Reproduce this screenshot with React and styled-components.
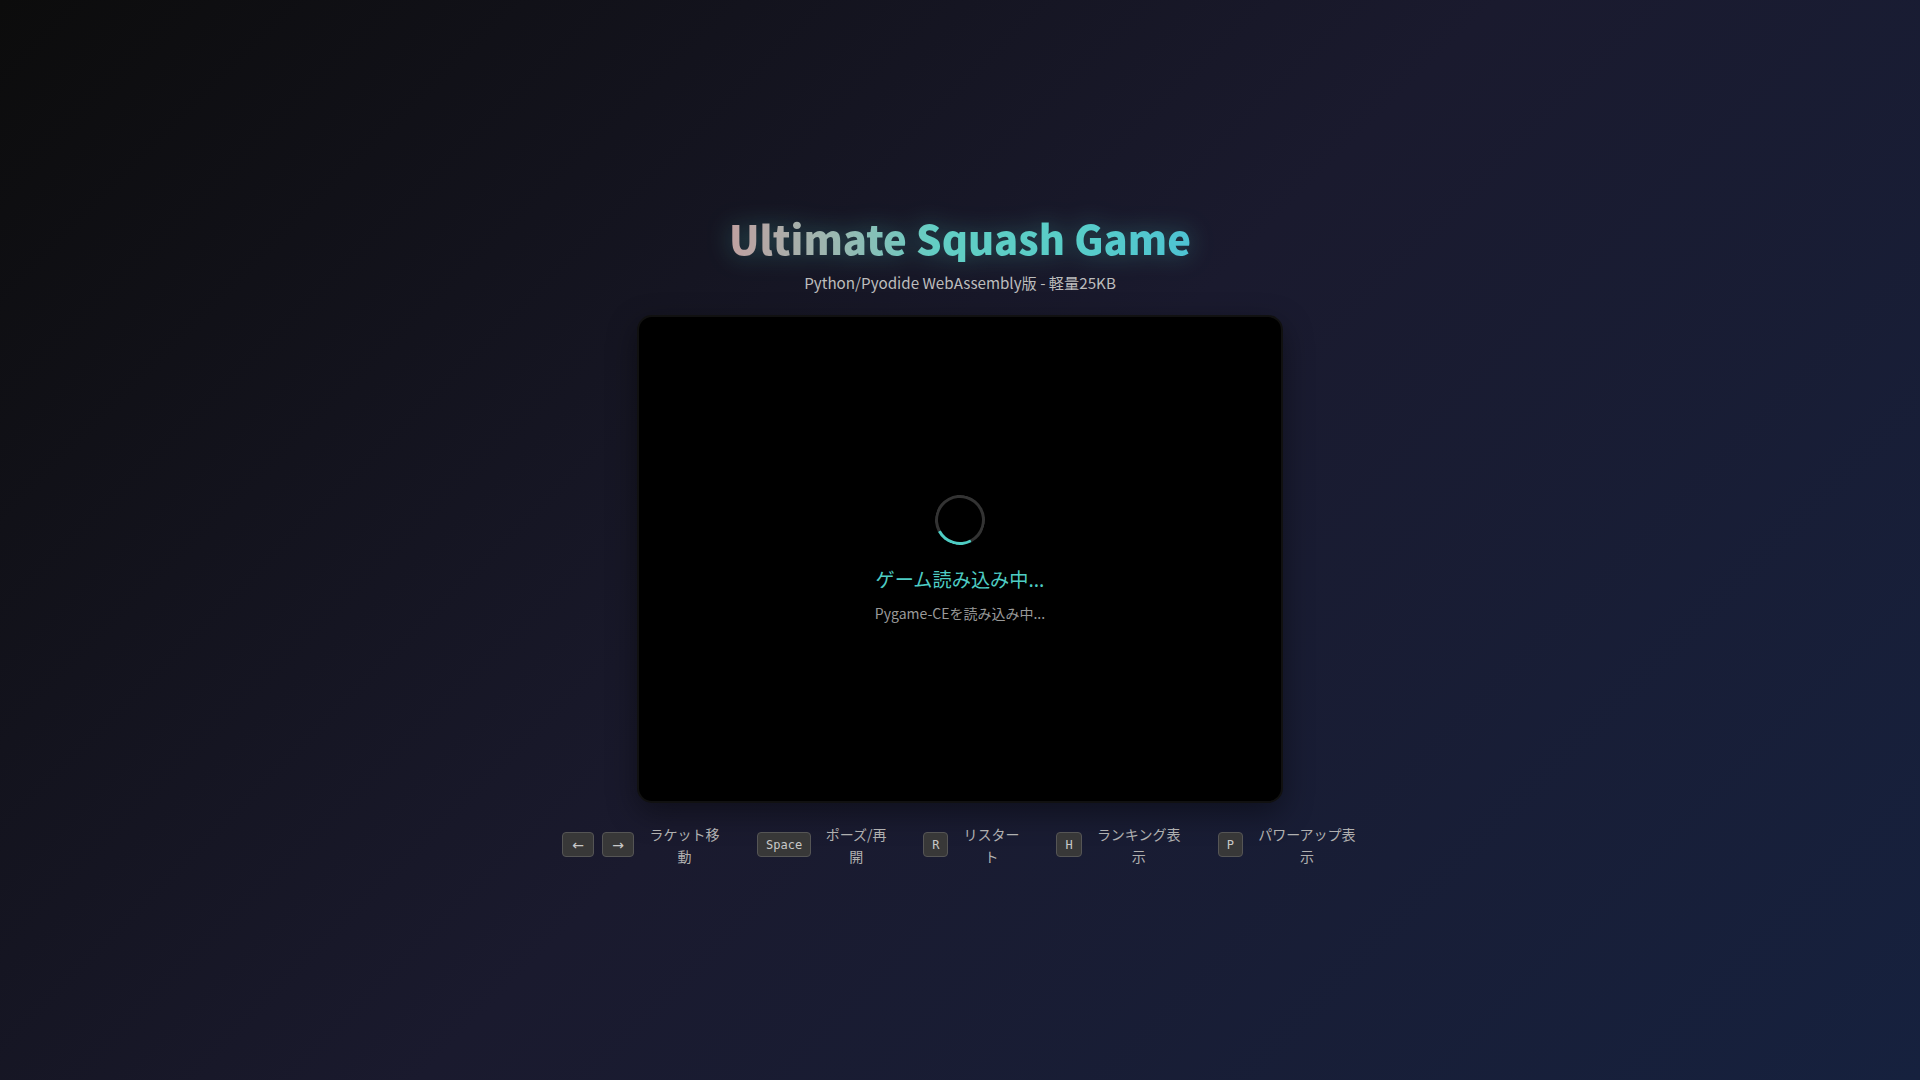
import React from 'react';
import styled, { createGlobalStyle } from 'styled-components';

const controls = [
  { keys: ['←', '→'], label: 'ラケット移動', width: 75 },
  { keys: ['Space'], label: 'ポーズ/再開', width: 64 },
  { keys: ['R'], label: 'リスタート', width: 60 },
  { keys: ['H'], label: 'ランキング表示', width: 88 },
  { keys: ['P'], label: 'パワーアップ表示', width: 102 },
];

const App = () => {
  return (
    <>
      <GlobalStyle />
      <Wrapper>
        <Title>Ultimate Squash Game</Title>
        <SubTitle>Python/Pyodide WebAssembly版 - 軽量25KB</SubTitle>

        <GameBox>
          <Loading>
            <Spinner />
            <LoadingText>ゲーム読み込み中...</LoadingText>
            <LoadingSub>Pygame-CEを読み込み中...</LoadingSub>
          </Loading>
        </GameBox>

        <Controls>
          {controls.map((c) => (
            <ControlItem key={c.label}>
              <KeyGroup>
                {c.keys.map((k) => (
                  <Key key={k} $arrow={k.length === 1 && !/[A-Z]/.test(k)}>
                    {k}
                  </Key>
                ))}
              </KeyGroup>
              <ControlLabel $width={c.width}>{c.label}</ControlLabel>
            </ControlItem>
          ))}
        </Controls>
      </Wrapper>
    </>
  );
};

const GlobalStyle = createGlobalStyle`
  html, body {
    margin: 0;
    padding: 0;
  }
  body {
    font-family: "Noto Sans CJK JP", "Noto Sans", sans-serif;
    background: #0c0c0c;
  }
`;

const Wrapper = styled.div`
  min-height: 100vh;
  display: flex;
  flex-direction: column;
  align-items: center;
  justify-content: center;
  background: linear-gradient(135deg, #0c0c0c 0%, #1a1a2e 50%, #16213e 100%);
`;

const Title = styled.h1`
  margin: 0 0 8px;
  font-size: 40px;
  line-height: 48px;
  font-weight: 900;
  background: linear-gradient(
    90deg,
    #c0a0a0 0%,
    #96bab2 25%,
    #62cec4 45%,
    #58cdc8 75%,
    #4ec3d3 100%
  );
  -webkit-background-clip: text;
  background-clip: text;
  -webkit-text-fill-color: transparent;
  filter: drop-shadow(0 0 12px rgba(78, 205, 196, 0.35));
`;

const SubTitle = styled.p`
  margin: 0 0 21px;
  font-size: 15.2px;
  line-height: 24px;
  color: #bdbdbd;
`;

const GameBox = styled.div`
  width: 642px;
  height: 484px;
  background: #000;
  border: 2px solid #111;
  border-radius: 15px;
  box-shadow: 0 10px 30px rgba(0, 0, 0, 0.4);
  display: flex;
  align-items: center;
  justify-content: center;
  margin-bottom: 20px;
`;

const Loading = styled.div`
  display: flex;
  flex-direction: column;
  align-items: center;
`;

const Spinner = styled.div`
  width: 50px;
  height: 50px;
  box-sizing: border-box;
  border: 3px solid #333;
  border-top-color: #4ecdc4;
  border-radius: 50%;
  transform: rotate(197deg);
`;

const LoadingText = styled.p`
  margin: 20px 0 0;
  font-size: 19.2px;
  color: #4ecdc4;
`;

const LoadingSub = styled.p`
  margin: 10px 0 0;
  font-size: 14px;
  color: #999;
`;

const Controls = styled.div`
  display: flex;
  align-items: center;
  justify-content: center;
  gap: 35px;
`;

const ControlItem = styled.div`
  display: flex;
  align-items: center;
  gap: 13px;
`;

const KeyGroup = styled.div`
  display: flex;
  gap: 8px;
`;

const Key = styled.span`
  box-sizing: border-box;
  height: 25px;
  min-width: ${({ $arrow }) => ($arrow ? '32px' : '0')};
  padding: 0 8px;
  display: flex;
  align-items: center;
  justify-content: center;
  background: #383838;
  border: 1px solid #555;
  border-radius: 4px;
  color: #c8c8c8;
  font-family: ${({ $arrow }) => ($arrow ? '"DejaVu Sans", sans-serif' : '"DejaVu Sans Mono", monospace')};
  font-size: ${({ $arrow }) => ($arrow ? '14px' : '12px')};
`;

const ControlLabel = styled.span`
  width: ${({ $width }) => $width}px;
  font-size: 14px;
  line-height: 22px;
  color: #b0b0b0;
  text-align: center;
`;

export default App;
